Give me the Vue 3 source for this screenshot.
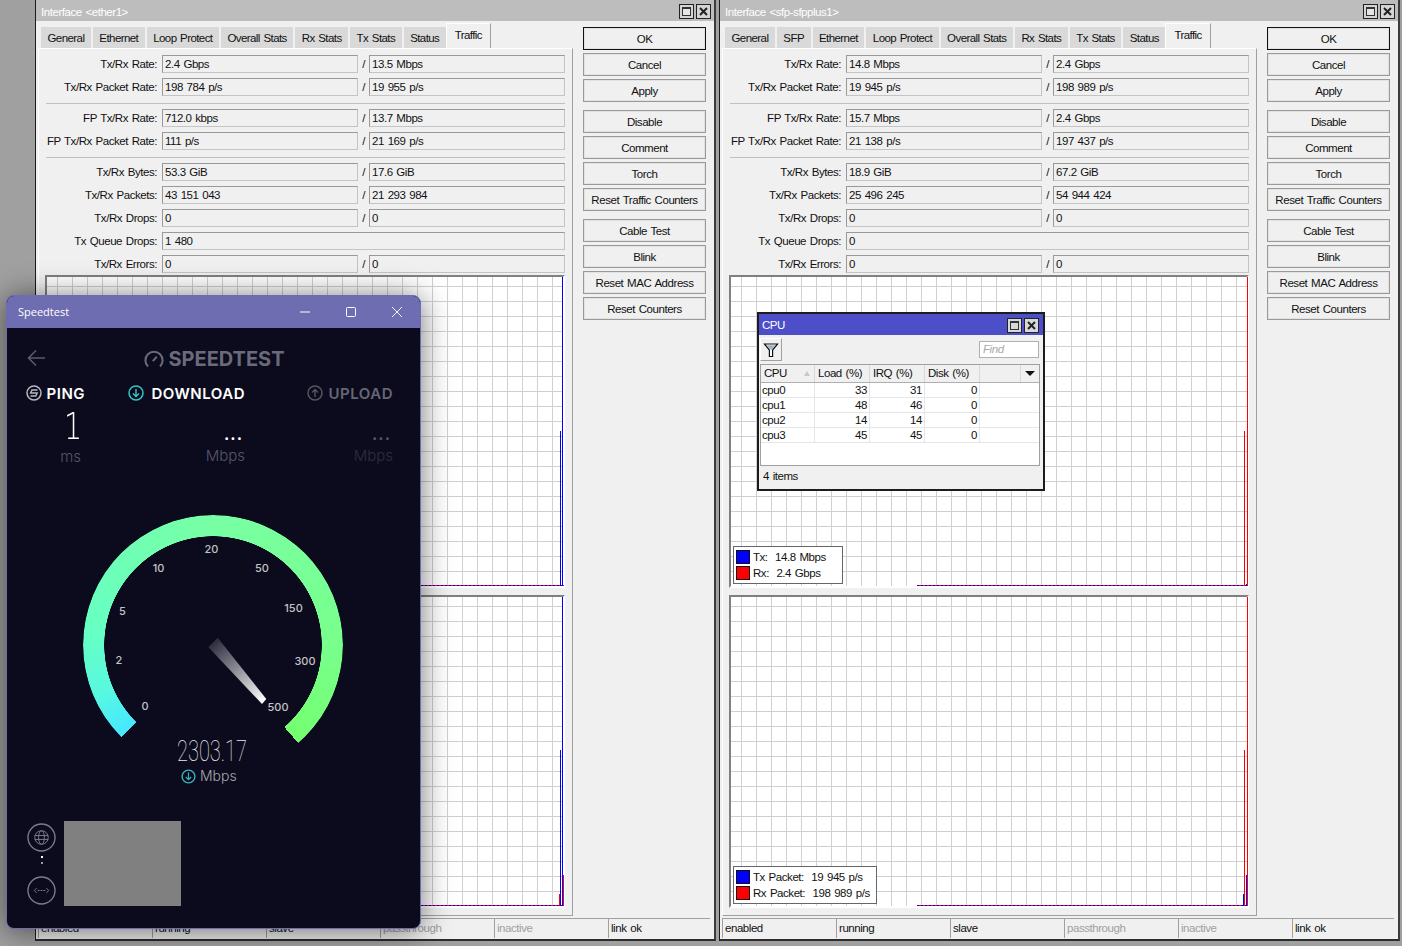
<script setup>
const stats = (r) => [
  { rows: [
    { label: 'Tx/Rx Rate:', a: r[0], b: r[1] },
    { label: 'Tx/Rx Packet Rate:', a: r[2], b: r[3] },
  ] },
  { rows: [
    { label: 'FP Tx/Rx Rate:', a: r[4], b: r[5] },
    { label: 'FP Tx/Rx Packet Rate:', a: r[6], b: r[7] },
  ] },
  { rows: [
    { label: 'Tx/Rx Bytes:', a: r[8], b: r[9] },
    { label: 'Tx/Rx Packets:', a: r[10], b: r[11] },
    { label: 'Tx/Rx Drops:', a: '0', b: '0' },
    { label: 'Tx Queue Drops:', a: r[12] },
    { label: 'Tx/Rx Errors:', a: '0', b: '0' },
  ] },
];

const BLUE = '#0000ff';
const RED = '#ff0000';

const windows = [
  {
    id: 'ether1',
    left: 35,
    title: 'Interface <ether1>',
    tabs: ['General', 'Ethernet', 'Loop Protect', 'Overall Stats', 'Rx Stats', 'Tx Stats', 'Status', 'Traffic'],
    groups: stats([
      '2.4 Gbps', '13.5 Mbps', '198 784 p/s', '19 955 p/s', '712.0 kbps', '13.7 Mbps', '111 p/s',
      '21 169 p/s', '53.3 GiB', '17.6 GiB', '43 151 043', '21 293 984', '1 480',
    ]),
    graphs: [
      { traces: [{ x: 515, h: 309, c: BLUE }, { x: 513, h: 155, c: BLUE }, { x: 516, h: 1, c: RED }] },
      { traces: [{ x: 515, h: 309, c: BLUE }, { x: 513, h: 156, c: BLUE }, { x: 516, h: 31, c: RED }, { x: 512, h: 12, c: RED }] },
    ],
  },
  {
    id: 'sfp',
    left: 719,
    title: 'Interface <sfp-sfpplus1>',
    tabs: ['General', 'SFP', 'Ethernet', 'Loop Protect', 'Overall Stats', 'Rx Stats', 'Tx Stats', 'Status', 'Traffic'],
    groups: stats([
      '14.8 Mbps', '2.4 Gbps', '19 945 p/s', '198 989 p/s', '15.7 Mbps', '2.4 Gbps', '21 138 p/s',
      '197 437 p/s', '18.9 GiB', '67.2 GiB', '25 496 245', '54 944 424', '0',
    ]),
    graphs: [
      {
        traces: [{ x: 516, h: 309, c: RED }, { x: 513, h: 155, c: RED }, { x: 515, h: 2, c: BLUE }],
        legend: [{ name: 'Tx:', value: '14.8 Mbps', c: BLUE }, { name: 'Rx:', value: '2.4 Gbps', c: RED }],
      },
      {
        traces: [{ x: 516, h: 309, c: RED }, { x: 513, h: 156, c: RED }, { x: 515, h: 31, c: BLUE }, { x: 512, h: 12, c: BLUE }],
        legend: [{ name: 'Tx Packet:', value: '19 945 p/s', c: BLUE }, { name: 'Rx Packet:', value: '198 989 p/s', c: RED }],
      },
    ],
  },
];

const buttonGroups = [
  ['OK', 'Cancel', 'Apply'],
  ['Disable', 'Comment', 'Torch', 'Reset Traffic Counters'],
  ['Cable Test', 'Blink', 'Reset MAC Address', 'Reset Counters'],
];

const statuses = [
  { text: 'enabled' },
  { text: 'running' },
  { text: 'slave' },
  { text: 'passthrough', off: true },
  { text: 'inactive', off: true },
  { text: 'link ok' },
];

const cpus = [
  ['cpu0', 33, 31, 0],
  ['cpu1', 48, 46, 0],
  ['cpu2', 14, 14, 0],
  ['cpu3', 45, 45, 0],
];

const ticks = [
  ['0', 145, 710], ['2', 119, 664], ['5', 122.5, 615], ['10', 158.5, 571.5], ['20', 211.5, 552.5],
  ['50', 262, 571.5], ['150', 293.5, 612], ['300', 305, 665], ['500', 278, 711],
];
</script>

<template>
  <div class="desktop">
    <section
      v-for="win in windows"
      :key="win.id"
      class="window"
      :style="{ left: win.left + 'px' }"
    >
      <header class="titlebar">
        <span>{{ win.title }}</span>
        <div class="title-buttons">
          <span class="win-btn"><i class="win-square"></i></span>
          <span class="win-btn">
            <svg width="9" height="9" viewBox="0 0 9 9"><path d="M1 1l7 7M8 1L1 8" stroke="#222" stroke-width="2" /></svg>
          </span>
        </div>
      </header>

      <div class="main">
        <div class="tabbed">
          <div class="tabs">
            <div
              v-for="tab in win.tabs"
              :key="tab"
              class="tab"
              :class="{ active: tab === 'Traffic' }"
            >
              {{ tab }}
            </div>
          </div>
          <div class="panel">
            <template v-for="(group, g) in win.groups" :key="g">
              <div v-for="row in group.rows" :key="row.label" class="row">
                <label class="row-label">{{ row.label }}</label>
                <div class="field">{{ row.a }}</div>
                <template v-if="row.b">
                  <span class="slash">/</span>
                  <div class="field">{{ row.b }}</div>
                </template>
              </div>
              <div v-if="g < win.groups.length - 1" class="sep"></div>
            </template>

            <div class="graphs">
              <div v-for="(graph, i) in win.graphs" :key="i" class="graph">
                <div class="baseline"></div>
                <span
                  v-for="(t, k) in graph.traces"
                  :key="k"
                  class="trace"
                  :style="{ left: t.x + 'px', height: t.h + 'px', background: t.c }"
                ></span>
                <div v-if="graph.legend" class="legend">
                  <div v-for="item in graph.legend" :key="item.name" class="legend-row">
                    <i class="swatch" :style="{ background: item.c }"></i>
                    <span>{{ item.name }}&nbsp; {{ item.value }}</span>
                  </div>
                </div>
              </div>

              <div v-if="win.id === 'sfp'" class="cpu">
                <header class="cpu-title">
                  <span>CPU</span>
                  <div class="title-buttons cpu-buttons">
                    <span class="win-btn"><i class="win-square"></i></span>
                    <span class="win-btn">
                      <svg width="9" height="9" viewBox="0 0 9 9"><path d="M1 1l7 7M8 1L1 8" stroke="#222" stroke-width="2" /></svg>
                    </span>
                  </div>
                </header>
                <div class="cpu-tools">
                  <button class="filter">
                    <svg width="16" height="16" viewBox="0 0 16 16">
                      <path d="M1.5 2h13L9.6 8v6.5H6.4V8z" fill="#fff" stroke="#111" stroke-width="1.2" />
                      <path d="M3.5 3.2h9L9 7.5H7z" fill="#9fb4c6" />
                    </svg>
                  </button>
                  <div class="find">Find</div>
                </div>
                <div class="table">
                  <div class="thead">
                    <div class="th">CPU<i class="sort"></i></div>
                    <div class="th">Load (%)</div>
                    <div class="th">IRQ (%)</div>
                    <div class="th">Disk (%)</div>
                    <div class="th th-fill"></div>
                    <div class="th th-menu"><i class="menu-arrow"></i></div>
                  </div>
                  <div v-for="cpu in cpus" :key="cpu[0]" class="tr">
                    <div class="td td-name">{{ cpu[0] }}</div>
                    <div v-for="(v, n) in cpu.slice(1)" :key="n" class="td td-num">{{ v }}</div>
                    <div class="td"></div>
                  </div>
                </div>
                <div class="cpu-status">4 items</div>
              </div>
            </div>
          </div>
        </div>

        <aside class="actions">
          <div v-for="(group, g) in buttonGroups" :key="g" class="action-group">
            <button
              v-for="name in group"
              :key="name"
              class="action"
              :class="{ primary: name === 'OK' }"
            >
              {{ name }}
            </button>
          </div>
        </aside>
      </div>

      <footer class="statusbar">
        <div
          v-for="s in statuses"
          :key="s.text"
          class="status"
          :class="{ off: s.off }"
        >
          {{ s.text }}
        </div>
      </footer>
    </section>

    <section class="speedtest">
      <header class="st-title">
        <span>Speedtest</span>
        <div class="st-controls">
          <svg width="10" height="10" viewBox="0 0 10 10"><path d="M0 5h10" stroke="#fff" /></svg>
          <svg width="10" height="10" viewBox="0 0 10 10"><rect x=".5" y=".5" width="9" height="9" rx="1" fill="none" stroke="#fff" /></svg>
          <svg width="10" height="10" viewBox="0 0 10 10"><path d="M0 0l10 10M10 0L0 10" stroke="#fff" stroke-width=".9" /></svg>
        </div>
      </header>

      <div class="st-body">
        <div class="st-brand">
          <svg class="st-back" width="18" height="18" viewBox="0 0 18 18">
            <path d="M18 9H1.5M9 1.5L1.5 9 9 16.5" fill="none" stroke="#5a5a6c" stroke-width="1.6" />
          </svg>
          <div class="st-logo">
            <svg width="20" height="18" viewBox="0 0 20 18">
              <path d="M4 16.5a8.6 8.6 0 1 1 12 0" fill="none" stroke="#6a6a7a" stroke-width="2" />
              <path d="M8.8 11.2l4-4.6" stroke="#6a6a7a" stroke-width="2" />
            </svg>
            <span class="st-word">SPEEDTEST</span>
          </div>
        </div>

        <div class="st-metrics">
          <div class="metric metric-ping">
            <div class="metric-head">
              <svg width="16" height="16" viewBox="0 0 16 16">
                <circle cx="8" cy="8" r="7" fill="none" stroke="#b8b8c0" stroke-width="1.5" />
                <path d="M11.5 5H6L4.6 8h6.6L9.8 11H4.5" fill="none" stroke="#b8b8c0" stroke-width="1.4" />
              </svg>
              <span>PING</span>
            </div>
            <div class="metric-value one">1</div>
            <div class="metric-unit">ms</div>
          </div>
          <div class="metric metric-down">
            <div class="metric-head">
              <svg width="16" height="16" viewBox="0 0 16 16">
                <circle cx="8" cy="8" r="7" fill="none" stroke="#37c4c4" stroke-width="1.5" />
                <path d="M8 4v7.5M5 8.5l3 3 3-3" fill="none" stroke="#37c4c4" stroke-width="1.4" />
              </svg>
              <span>DOWNLOAD</span>
            </div>
            <div class="metric-value dots">...</div>
            <div class="metric-unit">Mbps</div>
          </div>
          <div class="metric dim">
            <div class="metric-head">
              <svg width="16" height="16" viewBox="0 0 16 16">
                <circle cx="8" cy="8" r="7" fill="none" stroke="#55555f" stroke-width="1.5" />
                <path d="M8 12V4.5M5 7.5l3-3 3 3" fill="none" stroke="#55555f" stroke-width="1.4" />
              </svg>
              <span>UPLOAD</span>
            </div>
            <div class="metric-value dots">...</div>
            <div class="metric-unit">Mbps</div>
          </div>
        </div>

        <div class="gauge-wrap">
          <div class="gauge-arc"></div>
          <svg class="gauge" width="413" height="290" viewBox="7 505 413 290">
            <defs>
              <linearGradient id="needleFill" gradientUnits="userSpaceOnUse" x1="213" y1="642" x2="264" y2="702">
                <stop offset="0" stop-color="#2c2c3e" />
                <stop offset="1" stop-color="#ffffff" />
              </linearGradient>
            </defs>
            <polygon points="217.7,637.7 208.3,647 262,704 266.3,699" fill="url(#needleFill)" />
            <text
              v-for="t in ticks"
              :key="t[0]"
              :x="t[1]"
              :y="t[2]"
              class="tick"
              text-anchor="middle"
            >{{ t[0] }}</text>
            <text x="177" y="761" class="speed" textLength="70" lengthAdjust="spacingAndGlyphs">2303.17</text>
            <circle cx="188.5" cy="776.5" r="6.4" fill="none" stroke="#37b4b8" stroke-width="1.4" />
            <path d="M188.5 772.5v7M185.8 777l2.7 2.7 2.7-2.7" fill="none" stroke="#37b4b8" stroke-width="1.2" />
            <text x="200" y="781" class="speed-unit">Mbps</text>
          </svg>
        </div>

        <div class="st-bottom">
          <div class="st-servers">
            <svg class="st-ring" width="29" height="29" viewBox="0 0 30 30">
              <circle cx="15" cy="15" r="14" fill="none" stroke="#7c7c8c" stroke-width="1.4" />
              <circle cx="15" cy="15" r="7" fill="none" stroke="#7c7c8c" />
              <ellipse cx="15" cy="15" rx="3" ry="7" fill="none" stroke="#7c7c8c" />
              <path d="M8 13h14M8 17h14" stroke="#7c7c8c" />
            </svg>
            <i class="dot"></i>
            <i class="dot dot-dim"></i>
            <svg class="st-ring st-ring-last" width="29" height="29" viewBox="0 0 30 30">
              <circle cx="15" cy="15" r="14" fill="none" stroke="#7c7c8c" stroke-width="1.4" />
              <path d="M10 12.5L7.5 15l2.5 2.5M20 12.5l2.5 2.5-2.5 2.5" fill="none" stroke="#7c7c8c" />
              <path d="M11 15h8" stroke="#7c7c8c" stroke-dasharray="2 1" />
            </svg>
          </div>
          <div class="st-ad"></div>
        </div>
      </div>
    </section>
  </div>
</template>

<style scoped>
.desktop {
  position: relative;
  width: 1402px;
  height: 946px;
  overflow: hidden;
  background: #a0a0a0;
  font-family: "Liberation Sans", Arial, sans-serif;
  font-size: 11.5px;
  letter-spacing: -0.45px;
  word-spacing: 1px;
  color: #111;
}

.window {
  position: absolute;
  top: 0;
  width: 681px;
  height: 941px;
  box-sizing: border-box;
  display: flex;
  flex-direction: column;
  background: #f0f0f0;
  border-left: 1px solid #1c1c1c;
  border-right: 2px solid #3c3c3c;
  border-bottom: 2px solid #2c2c2c;
}

.titlebar {
  flex: none;
  height: 21px;
  box-sizing: border-box;
  display: flex;
  align-items: center;
  justify-content: space-between;
  padding: 2px 3px 0 5px;
  background: #bdbdbd;
  color: #fff;
}

.title-buttons {
  display: flex;
  gap: 2px;
}

.win-btn {
  width: 13px;
  height: 13px;
  display: flex;
  align-items: center;
  justify-content: center;
  background: #d4d4d4;
  border: 1px solid #222;
}

.win-square {
  width: 7px;
  height: 6px;
  background: #e6e6e6;
  border: 1px solid #333;
  border-top-width: 2px;
}

.main {
  flex: none;
  display: flex;
  gap: 10px;
  padding: 6px 0 0 2px;
}

.tabbed {
  width: 535px;
}

.tabs {
  height: 21px;
  display: flex;
  gap: 2px;
  padding-left: 3px;
  letter-spacing: -0.58px;
}

.tab {
  height: 21px;
  box-sizing: border-box;
  display: flex;
  align-items: center;
  padding: 0 6.5px;
  background: #d9d9d9;
}

.tab.active {
  height: 25px;
  margin-top: -4px;
  margin-left: -2px;
  padding: 0 8px 3px;
  background: #f0f0f0;
  border-top: 1px solid #fff;
  border-left: 1px solid #fff;
  border-right: 1px solid #a0a0a0;
  position: relative;
}

.panel {
  height: 868px;
  box-sizing: border-box;
  display: flex;
  flex-direction: column;
  padding: 6px 7px 0;
  border-top: 1px solid #fff;
  border-left: 1px solid #fff;
  border-right: 1px solid #a0a0a0;
  border-bottom: 1px solid #a0a0a0;
}

.row {
  flex: none;
  height: 18px;
  display: flex;
  align-items: center;
  margin-bottom: 5px;
}

.row-label {
  flex: none;
  width: 111px;
  padding-right: 5px;
  text-align: right;
  white-space: nowrap;
}

.field {
  flex: 1 1 0;
  height: 18px;
  box-sizing: border-box;
  padding-left: 2px;
  line-height: 16px;
  white-space: nowrap;
  background: #f0f0f0;
  border: 1px solid #999;
  border-right-color: #c4c4c4;
  border-bottom-color: #c4c4c4;
}

.slash {
  flex: none;
  width: 11px;
  text-align: center;
}

.sep {
  flex: none;
  height: 1px;
  margin: 2px 0 5px;
  background: #c0c0c0;
}

.graphs {
  position: relative;
  display: flex;
  flex-direction: column;
  gap: 7px;
  margin: -3px 0 0 -1px;
}

.graph {
  position: relative;
  width: 520px;
  height: 313px;
  box-sizing: border-box;
  background-color: #fff;
  background-image:
    linear-gradient(to right, #d0d0d0 1px, transparent 1px),
    linear-gradient(to bottom, #d0d0d0 1px, transparent 1px);
  background-size: 15px 15px;
  background-position: 10px 9px;
  border-top: 2px solid #808080;
  border-left: 2px solid #808080;
  border-right: 2px solid #fff;
  border-bottom: 2px solid #fff;
}

.baseline {
  position: absolute;
  right: -1px;
  bottom: 0;
  width: 331px;
  height: 1px;
  background: repeating-linear-gradient(to right, #0000ff 0 2px, #ff0000 2px 4px);
}

.trace {
  position: absolute;
  bottom: 0;
  width: 1px;
}

.legend {
  position: absolute;
  left: 2px;
  bottom: 2px;
  min-width: 110px;
  box-sizing: border-box;
  padding: 2px 6px 3px 2px;
  background: #fff;
  border: 1px solid #666;
  display: flex;
  flex-direction: column;
  gap: 1px;
}

.legend-row {
  display: flex;
  align-items: center;
  gap: 3px;
  height: 15px;
  white-space: nowrap;
}

.swatch {
  width: 12px;
  height: 12px;
  border: 1px solid #111;
}

.cpu {
  position: absolute;
  left: 28px;
  top: 37px;
  width: 288px;
  height: 179px;
  box-sizing: border-box;
  display: flex;
  flex-direction: column;
  background: #f0f0f0;
  border: 2px solid #1c1c1c;
}

.cpu-title {
  flex: none;
  height: 21px;
  box-sizing: border-box;
  display: flex;
  align-items: center;
  justify-content: space-between;
  padding: 1px 4px 0 3px;
  background: #4c4fc8;
  color: #fff;
}

.cpu-buttons .win-btn {
  background: #d8d8d8;
}

.cpu-buttons .win-square {
  background: #d8d8d8;
}

.cpu-tools {
  flex: none;
  height: 29px;
  display: flex;
  align-items: center;
  justify-content: space-between;
  padding: 0 4px 0 1px;
}

.filter {
  width: 22px;
  height: 23px;
  padding: 0;
  display: flex;
  align-items: center;
  justify-content: center;
  background: #f0f0f0;
  border: 1px solid #a0a0a0;
  border-top-color: #fff;
  border-left-color: #fff;
}

.find {
  width: 60px;
  height: 17px;
  box-sizing: border-box;
  padding-left: 3px;
  line-height: 15px;
  font-style: italic;
  color: #a8a8a8;
  background: #fff;
  border: 1px solid #b0b0b0;
}

.table {
  flex: none;
  height: 102px;
  box-sizing: border-box;
  margin: 0 3px 0 1px;
  background: #fff;
  border: 1px solid #a0a0a0;
}

.thead,
.tr {
  display: grid;
  grid-template-columns: 54px 55px 55px 55px 1fr;
}

.thead {
  grid-template-columns: 54px 55px 55px 55px 1fr 18px;
  height: 17px;
  background: #f0f0f0;
  border-bottom: 1px solid #b0b0b0;
}

.th {
  position: relative;
  padding-left: 3px;
  line-height: 17px;
  border-right: 1px solid #d8d8d8;
}

.sort {
  position: absolute;
  right: 4px;
  top: 6px;
  border-left: 3px solid transparent;
  border-right: 3px solid transparent;
  border-bottom: 5px solid #c8c8c8;
}

.th-menu {
  border-right: 0;
  display: flex;
  align-items: center;
  justify-content: center;
  padding: 0;
}

.menu-arrow {
  border-left: 5px solid transparent;
  border-right: 5px solid transparent;
  border-top: 5px solid #111;
}

.tr {
  height: 15px;
  border-bottom: 1px solid #e6e6e6;
  box-sizing: border-box;
}

.td {
  line-height: 14px;
  padding: 0 1px;
  border-right: 1px solid #e6e6e6;
}

.td-num {
  text-align: right;
  padding-right: 2px;
}

.td:last-child {
  border-right: 0;
}

.cpu-status {
  flex: 1;
  margin: 0 3px 0 1px;
  padding-left: 3px;
  line-height: 20px;
}

.actions {
  width: 123px;
  display: flex;
  flex-direction: column;
  gap: 8px;
}

.action-group {
  display: flex;
  flex-direction: column;
  gap: 3px;
}

.action {
  height: 23px;
  padding: 0;
  font: inherit;
  letter-spacing: inherit;
  word-spacing: inherit;
  color: inherit;
  background: #f0f0f0;
  border: 1px solid #999;
  box-shadow: inset 0 0 0 1px #e2e2e2;
}

.action.primary {
  border-color: #111;
}

.statusbar {
  flex: none;
  display: flex;
  margin: 2px 0 0 2px;
}

.status {
  width: 114px;
  height: 20px;
  box-sizing: border-box;
  padding-left: 2px;
  line-height: 18px;
  border-top: 1px solid #a0a0a0;
  border-left: 1px solid #a0a0a0;
}

.status:last-child {
  width: 102px;
}

.status.off {
  color: #a0a0a0;
}

.speedtest {
  position: absolute;
  left: 6px;
  top: 295px;
  width: 415px;
  height: 634px;
  box-sizing: border-box;
  display: flex;
  flex-direction: column;
  overflow: visible;
  border: 1px solid #6f6db1;
  border-radius: 8px;
  background: #0b0b1d;
  box-shadow: 0 2px 30px rgba(0, 0, 0, 0.55);
  font-family: "Inter", "Liberation Sans", sans-serif;
  letter-spacing: 0;
  word-spacing: 0;
}

.st-title {
  flex: none;
  height: 32px;
  box-sizing: border-box;
  display: flex;
  align-items: center;
  justify-content: space-between;
  padding: 0 18px 2px 11px;
  color: #fff;
  font-family: "Open Sans", sans-serif;
  font-size: 11px;
  background: #6f6db1;
  border-radius: 7px 7px 0 0;
}

.st-controls {
  display: flex;
  gap: 36px;
  margin-top: 2px;
}

.st-body {
  flex: 1;
  min-height: 0;
  display: flex;
  flex-direction: column;
}

.st-brand {
  position: relative;
  flex: none;
  height: 43px;
  display: flex;
  align-items: flex-end;
  justify-content: center;
}

.st-back {
  position: absolute;
  left: 20px;
  top: 21px;
}

.st-logo {
  display: flex;
  align-items: center;
  gap: 4px;
  margin-left: 2px;
  transform: translateY(-3px);
}

.st-word {
  font-size: 20px;
  font-weight: 700;
  line-height: 18px;
  color: #6a6a7a;
}

.st-metrics {
  flex: none;
  display: grid;
  grid-template-columns: 102px 178px 86px;
  padding: 14px 0 0 20px;
}

.metric {
  display: flex;
  flex-direction: column;
  align-items: flex-end;
  color: #55556a;
}

.metric-ping {
  width: 58px;
}

.metric-down {
  width: 116px;
}

.metric-head {
  display: flex;
  align-items: center;
  gap: 5px;
  height: 16px;
  font-size: 15px;
  font-weight: 600;
  letter-spacing: 0.5px;
  color: #fff;
  white-space: nowrap;
}

.metric-down .metric-head {
  gap: 7px;
}

.metric.dim .metric-head {
  color: #666674;
  gap: 6px;
}

.metric-value {
  height: 40px;
  color: #fff;
}

.metric.dim .metric-value {
  color: #55556a;
}

.one {
  font-family: "DejaVu Sans", sans-serif;
  font-weight: 200;
  font-size: 38px;
  line-height: 40px;
  padding-top: 5px;
  box-sizing: border-box;
  transform: scaleX(0.75);
  transform-origin: right;
  margin-right: 3px;
}

.dots {
  font-size: 16px;
  font-weight: 700;
  line-height: 40px;
  letter-spacing: 1px;
  padding: 13px 2px 0 0;
  box-sizing: border-box;
}

.metric-unit {
  margin-top: 6px;
  font-size: 15px;
  font-weight: 300;
  line-height: 18px;
}

.metric-ping .metric-unit {
  margin-top: 7px;
  padding-right: 4px;
}

.metric.dim .metric-unit {
  color: #2e2e40;
}

.gauge-wrap {
  position: relative;
  flex: none;
  width: 413px;
  height: 290px;
  margin-top: 39px;
}

.gauge-arc {
  position: absolute;
  left: 76px;
  top: 10px;
  width: 260px;
  height: 260px;
  border-radius: 50%;
  background: conic-gradient(
    from 225deg,
    #45e8ff 0deg,
    #58f8e0 22deg,
    #66ffc4 50deg,
    #78ffa4 135deg,
    #78ff8c 225deg,
    #74ff70 274deg,
    transparent 274deg
  );
  -webkit-mask: radial-gradient(circle, transparent 108.5px, #000 109px);
  mask: radial-gradient(circle, transparent 108.5px, #000 109px);
}

.gauge {
  position: relative;
  display: block;
}

.tick {
  font-size: 11px;
  font-weight: 500;
  fill: #c4c4c8;
}

.speed {
  font-family: "Roboto", sans-serif;
  font-weight: 100;
  font-size: 30px;
  fill: #e8e8ec;
}

.speed-unit {
  font-size: 14px;
  font-weight: 300;
  fill: #a8a8b0;
}

.st-bottom {
  flex: none;
  margin-top: auto;
  display: flex;
  gap: 8px;
  padding: 0 0 22px 20px;
}

.st-servers {
  width: 29px;
  height: 85px;
  display: flex;
  flex-direction: column;
  align-items: center;
}

.st-ring {
  flex: none;
  margin-top: 2px;
}

.st-ring-last {
  margin-top: auto;
  margin-bottom: 1px;
}

.dot {
  flex: none;
  width: 2px;
  height: 2px;
  margin-top: 4px;
  background: #fff;
}

.dot-dim {
  background: #9a9aa4;
}

.st-ad {
  width: 117px;
  height: 85px;
  background: #808080;
}
</style>

<style>
html,
body {
  margin: 0;
  background: #a0a0a0;
}
</style>
